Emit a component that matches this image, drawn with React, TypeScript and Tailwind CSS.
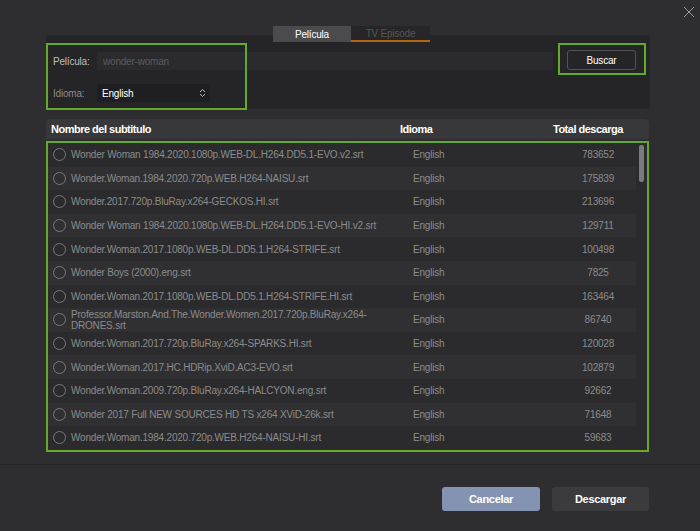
import React from 'react'

const rows: [string, string][] = [
  ['Wonder Woman 1984.2020.1080p.WEB-DL.H264.DD5.1-EVO.v2.srt', '783652'],
  ['Wonder.Woman.1984.2020.720p.WEB.H264-NAISU.srt', '175839'],
  ['Wonder.2017.720p.BluRay.x264-GECKOS.HI.srt', '213696'],
  ['Wonder Woman 1984.2020.1080p.WEB-DL.H264.DD5.1-EVO-HI.v2.srt', '129711'],
  ['Wonder.Woman.2017.1080p.WEB-DL.DD5.1.H264-STRIFE.srt', '100498'],
  ['Wonder Boys (2000).eng.srt', '7825'],
  ['Wonder.Woman.2017.1080p.WEB-DL.DD5.1.H264-STRIFE.HI.srt', '163464'],
  ['Professor.Marston.And.The.Wonder.Women.2017.720p.BluRay.x264-DRONES.srt', '86740'],
  ['Wonder.Woman.2017.720p.BluRay.x264-SPARKS.HI.srt', '120028'],
  ['Wonder.Woman.2017.HC.HDRip.XviD.AC3-EVO.srt', '102879'],
  ['Wonder.Woman.2009.720p.BluRay.x264-HALCYON.eng.srt', '92662'],
  ['Wonder 2017 Full NEW SOURCES HD TS x264 XViD-26k.srt', '71648'],
  ['Wonder.Woman.1984.2020.720p.WEB.H264-NAISU-HI.srt', '59683'],
]

export default function App() {
  return (
    <div className="w-[700px] h-[531px] bg-[#2e2e30] flex flex-col text-[10px] tracking-[-0.2px] font-['Liberation_Sans',sans-serif] overflow-hidden">
      {/* Close */}
      <div className="h-[26px] flex justify-end pr-[5px] pt-[6px]">
        <svg width="12" height="12" viewBox="0 0 12 12" className="text-[#9a9a9a]">
          <path d="M1 1 L11 11 M11 1 L1 11" stroke="currentColor" strokeWidth="1" />
        </svg>
      </div>

      <div className="pl-[46px] pr-[50px] flex flex-col">
        {/* Tabs */}
        <div className="h-[16px] flex justify-center pl-[7px] relative z-10">
          <div className="w-[78px] h-[16px] bg-[#4b4b4d] text-white flex items-center justify-center">Película</div>
          <div className="w-[79px] h-[16px] bg-[#262628] text-[#555557] flex items-center justify-center border-b-2 border-[#b3650f]">TV Episode</div>
        </div>

        {/* Search panel */}
        <div className="-mt-[7px] h-[74px] bg-[#252527] rounded-[3px] relative pt-[17px] pl-[7px] pr-[14px]">
          <div className="flex items-center">
            <span className="w-[44px] text-[#bdbdbd]">Película:</span>
            <div className="flex-1 h-[18px] bg-[#2b2b2d] flex items-center pl-[6px] text-[#5c5c5e]">wonder-woman</div>
            <button className="ml-[14px] w-[69px] h-[20px] -mt-[2px] border border-[#545456] rounded-[3px] text-white">Buscar</button>
          </div>
          <div className="flex items-center mt-[14px]">
            <span className="w-[44px] text-[#8a8a8a]">Idioma:</span>
            <div className="w-[113px] h-[18px] bg-[#1f1f21] flex items-center justify-between pl-[5px] pr-[4px] text-white">
              <span>English</span>
              <svg width="7" height="10" viewBox="0 0 7 10">
                <path d="M1 4 L3.5 1.5 L6 4 M1 6 L3.5 8.5 L6 6" stroke="#bbbbbb" strokeWidth="1" fill="none" />
              </svg>
            </div>
          </div>
          <div className="absolute left-0 top-[8px] w-[201px] h-[67px] border-2 border-[#63a92b]" />
          <div className="absolute left-[512px] top-[8px] w-[88px] h-[32px] border-2 border-[#63a92b]" />
        </div>

        {/* Table header */}
        <div className="mt-[10px] mr-[1px] h-[20px] bg-[#38383a] rounded-t-[4px] flex items-center font-bold text-white text-[11px] tracking-[-0.5px]">
          <span className="pl-[5px] w-[354px]">Nombre del subtitulo</span>
          <span className="w-[153px]">Idioma</span>
          <span>Total descarga</span>
        </div>

        {/* List */}
        <div className="mt-[2px] mr-[1px] h-[311px] border-2 border-[#63a92b] bg-[#2b2b2d] flex overflow-hidden">
          <div className="flex-1 flex flex-col">
            {rows.map(([name, count], i) => (
              <div
                key={i}
                className={`h-[23.6px] shrink-0 flex items-center text-[#8b8b8b] ${i % 2 === 1 ? 'bg-[#303032]' : 'bg-[#2b2b2d]'}`}
              >
                <span className="ml-[5px] w-[13px] h-[13px] rounded-full border border-[#7a7a7a] shrink-0" />
                <span className="ml-[5px] w-[318px] leading-[11px]">{name}</span>
                <span className="ml-[24px] w-[152px]">English</span>
                <span className="w-[66px] text-center">{count}</span>
              </div>
            ))}
          </div>
          <div className="w-[11px] pt-[2px] flex justify-center">
            <div className="w-[5px] h-[37px] bg-[#7b7b7d] rounded-[2px]" />
          </div>
        </div>
      </div>

      {/* Footer */}
      <div className="mt-[12px] h-[1px] bg-[#232325]" />
      <div className="flex justify-end gap-[12px] pr-[51px] pt-[22px] text-[11px] tracking-[-0.3px]">
        <button className="w-[98px] h-[24px] rounded-[3px] bg-[#8593b3] text-white font-bold">Cancelar</button>
        <button className="w-[97px] h-[24px] rounded-[3px] bg-[#3b3b3d] text-white font-bold">Descargar</button>
      </div>
    </div>
  )
}
